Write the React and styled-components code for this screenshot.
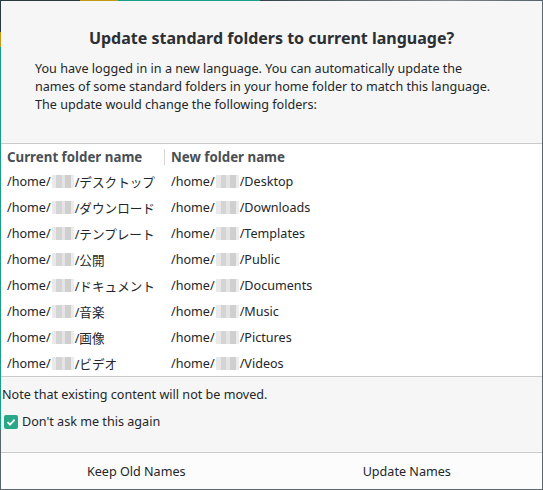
import React from "react";
import styled, { createGlobalStyle } from "styled-components";

const Global = createGlobalStyle`
  html, body { margin: 0; padding: 0; }
  body {
    font-family: "Noto Sans", "Noto Sans CJK JP", sans-serif;
    color: #232629;
  }
`;

const Frame = styled.div`
  width: 543px;
  height: 490px;
  box-sizing: border-box;
  padding: 1px;
  background:
    linear-gradient(to right, #2c3a40 0 80px, #c49a12 80px 118px, #17a085 118px 260px, #36434a 260px, #7d858a 450px, #56626a 543px) top / 100% 1px no-repeat,
    linear-gradient(to bottom, #2c3a40 0 32px, #c49a12 32px 47px, #17a085 47px 430px, #59646b 430px) left / 1px 100% no-repeat,
    #5d676d;
`;

const Dialog = styled.div`
  height: 100%;
  background: #f6f6f6;
  display: flex;
  flex-direction: column;
`;

const Title = styled.h1`
  margin: 0;
  padding-top: 26px;
  font-size: 16px;
  line-height: 22px;
  font-weight: 700;
  text-align: center;
  color: #2b2f33;
`;

const Intro = styled.p`
  margin: 11px 0 0 34px;
  width: 458px;
  font-size: 12.6px;
  line-height: 18px;
  color: #232629;
`;

const ListBox = styled.div`
  margin-top: 29px;
  height: 234px;
  box-sizing: border-box;
  background: #ffffff;
  border-top: 1px solid #c9cbcd;
  border-bottom: 1px solid #c9cbcd;
  padding-top: 1px;
`;

const Grid = styled.div`
  display: grid;
  grid-template-columns: 164px 1fr;
`;

const HeadCell = styled.div`
  height: 23px;
  display: flex;
  align-items: center;
  padding-left: 6px;
  font-size: 13.3px;
  font-weight: 700;
  color: #4a4f54;
  position: relative;
  ${(p) =>
    p.$sep
      ? `&::after { content: ""; position: absolute; right: 0; top: 4px; bottom: 3px; width: 1px; background: #d3d5d7; }`
      : ""}
`;

const Cell = styled.div`
  height: 26px;
  display: flex;
  align-items: center;
  padding-left: 6px;
  font-size: 12.6px;
  color: #232629;
  white-space: nowrap;
`;

const Blur = styled.span`
  display: inline-block;
  width: ${(p) => p.$w || 23}px;
  height: 13px;
  margin: 0 1px;
  background: linear-gradient(
    to right,
    #e9e9e9 0 20%,
    #d4d4d4 20% 45%,
    #e4e4e4 45% 60%,
    #cfcfcf 60% 85%,
    #ececec 85%
  );
  filter: blur(0.6px);
`;

const Note = styled.div`
  margin: 9px 0 0 1px;
  font-size: 12.6px;
  line-height: 18px;
`;

const CheckRow = styled.label`
  display: flex;
  align-items: center;
  gap: 4px;
  margin: 9px 0 0 3px;
  font-size: 12.6px;
  line-height: 18px;
`;

const Box = styled.span`
  width: 14px;
  height: 14px;
  border-radius: 2px;
  background: #28a888;
  display: inline-flex;
  align-items: center;
  justify-content: center;
`;

const Footer = styled.div`
  margin-top: auto;
  height: 36px;
  border-top: 1px solid #c9cbcd;
  background: #fcfcfc;
  display: grid;
  grid-template-columns: 1fr 1fr;
`;

const Button = styled.button`
  border: none;
  background: transparent;
  font-family: inherit;
  font-size: 12.6px;
  color: #232629;
  padding: 0;
  cursor: pointer;
`;

const rows = [
  ["デスクトップ", "Desktop"],
  ["ダウンロード", "Downloads"],
  ["テンプレート", "Templates"],
  ["公開", "Public"],
  ["ドキュメント", "Documents"],
  ["音楽", "Music"],
  ["画像", "Pictures"],
  ["ビデオ", "Videos"],
];

export default function App() {
  return (
    <>
      <Global />
      <Frame>
        <Dialog>
          <Title>Update standard folders to current language?</Title>
          <Intro>
            You have logged in in a new language. You can automatically update the
            names of some standard folders in your home folder to match this language.
            The update would change the following folders:
          </Intro>
          <ListBox>
            <Grid>
              <HeadCell $sep>Current folder name</HeadCell>
              <HeadCell>New folder name</HeadCell>
              {rows.map(([jp, en]) => (
                <React.Fragment key={en}>
                  <Cell>
                    /home/<Blur $w={22} />/{jp}
                  </Cell>
                  <Cell>
                    /home/<Blur $w={23} />/{en}
                  </Cell>
                </React.Fragment>
              ))}
            </Grid>
          </ListBox>
          <Note>Note that existing content will not be moved.</Note>
          <CheckRow>
            <Box>
              <svg width="10" height="10" viewBox="0 0 10 10">
                <path d="M1.5 5.2 L4 7.6 L8.6 2.6" fill="none" stroke="#fff" strokeWidth="1.8" />
              </svg>
            </Box>
            Don't ask me this again
          </CheckRow>
          <Footer>
            <Button>Keep Old Names</Button>
            <Button>Update Names</Button>
          </Footer>
        </Dialog>
      </Frame>
    </>
  );
}
